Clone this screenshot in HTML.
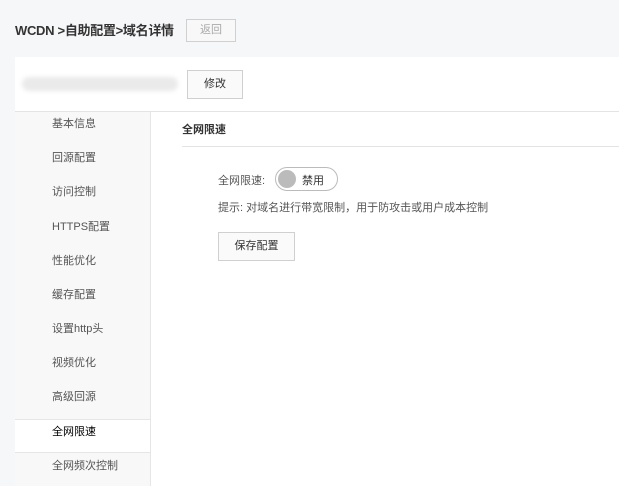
<!DOCTYPE html>
<html><head><meta charset="utf-8"><style>
*{margin:0;padding:0;box-sizing:border-box}
body{width:619px;height:486px;overflow:hidden;background:#f6f7f9;font-family:"Liberation Sans","Noto Sans CJK SC",sans-serif;position:relative;color:#333}
.a{position:absolute}
.title{left:15px;top:22px;font-size:13px;font-weight:bold;color:#333;line-height:17px;letter-spacing:-0.3px}
.btn{position:absolute;border:1px solid #d0d0d0;background:#fafafa;font-size:11px;text-align:center}
.panel{left:15px;top:57px;width:604px;height:429px;background:#fff}
.side{left:15px;top:112px;width:136px;height:374px;background:#f8f8f8;border-right:1px solid #e6e6e6}
.it{position:absolute;left:37px;font-size:11px;color:#555;line-height:14px}
</style></head><body>
<div class="a title">WCDN &gt;自助配置&gt;域名详情</div>
<div class="btn" style="left:186px;top:19px;width:50px;height:23px;line-height:21px;color:#aaa;background:#f8f8f8">返回</div>
<div class="a panel"></div>
<div class="a" style="left:22px;top:77px;width:156px;height:14px;border-radius:7px;background:#eaeaea;filter:blur(2px)"></div>
<div class="btn" style="left:187px;top:70px;width:56px;height:29px;line-height:27px;color:#333">修改</div>
<div class="a" style="left:15px;top:111px;width:604px;height:1px;background:#e4e4e4"></div>
<div class="a side">
<div class="it" style="top:5px">基本信息</div>
<div class="it" style="top:39px">回源配置</div>
<div class="it" style="top:73px">访问控制</div>
<div class="it" style="top:108px">HTTPS配置</div>
<div class="it" style="top:142px">性能优化</div>
<div class="it" style="top:176px">缓存配置</div>
<div class="it" style="top:210px">设置http头</div>
<div class="it" style="top:244px">视频优化</div>
<div class="it" style="top:278px">高级回源</div>
<div class="a" style="left:0;top:307px;width:135px;height:34px;background:#fff;border-top:1px solid #e6e6e6;border-bottom:1px solid #e6e6e6"></div>
<div class="it" style="top:313px;color:#000">全网限速</div>
<div class="it" style="top:347px">全网频次控制</div>
</div>
<div class="a" style="left:182px;top:121px;font-size:11px;font-weight:bold;color:#333">全网限速</div>
<div class="a" style="left:182px;top:146px;width:437px;height:1px;background:#e4e4e4"></div>
<div class="a" style="left:218px;top:172px;font-size:11px;color:#555">全网限速:</div>
<div class="a" style="left:275px;top:167px;width:63px;height:24px;border:1px solid #bbb;border-radius:12px;background:#fff"></div>
<div class="a" style="left:278px;top:170px;width:18px;height:18px;border-radius:50%;background:#bbb"></div>
<div class="a" style="left:302px;top:172px;font-size:11px;color:#333">禁用</div>
<div class="a" style="left:218px;top:199px;font-size:11px;color:#555">提示: 对域名进行带宽限制，用于防攻击或用户成本控制</div>
<div class="btn" style="left:218px;top:232px;width:77px;height:29px;line-height:27px;color:#333">保存配置</div>
</body></html>
